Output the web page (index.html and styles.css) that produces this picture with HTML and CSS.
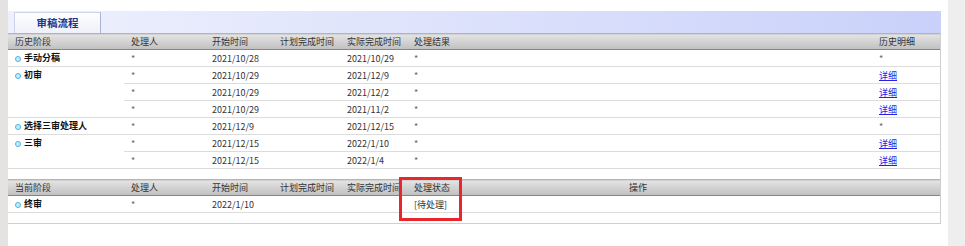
FILE: index.html
```html
<!DOCTYPE html>
<html lang="zh-CN">
<head>
    <meta charset="UTF-8">
    <title>审稿流程</title>
    <link rel="stylesheet" href="styles.css">
</head>
<body>
    <div class="side"></div>
    <div class="main">
        <div class="tabbar">
            <div class="tab">审稿流程</div>
        </div>
        <div class="box">
            <table class="grid">
                <colgroup>
                    <col class="c-stage"><col class="c-user"><col class="c-date"><col class="c-date2"><col class="c-date2"><col class="c-result"><col>
                </colgroup>
                <thead>
                    <tr>
                        <th>历史阶段</th><th>处理人</th><th>开始时间</th><th>计划完成时间</th><th>实际完成时间</th><th>处理结果</th><th>历史明细</th>
                    </tr>
                </thead>
                <tbody>
                    <tr>
                        <td class="stage"><span class="dot"></span>手动分稿</td><td class="star">*</td><td>2021/10/28</td><td></td><td>2021/10/29</td><td class="star">*</td><td class="star">*</td>
                    </tr>
                    <tr>
                        <td class="stage" rowspan="3"><span class="dot"></span>初审</td><td class="star">*</td><td>2021/10/29</td><td></td><td>2021/12/9</td><td class="star">*</td><td><a href="#">详细</a></td>
                    </tr>
                    <tr>
                        <td class="star">*</td><td>2021/10/29</td><td></td><td>2021/12/2</td><td class="star">*</td><td><a href="#">详细</a></td>
                    </tr>
                    <tr>
                        <td class="star">*</td><td>2021/10/29</td><td></td><td>2021/11/2</td><td class="star">*</td><td><a href="#">详细</a></td>
                    </tr>
                    <tr>
                        <td class="stage"><span class="dot"></span>选择三审处理人</td><td class="star">*</td><td>2021/12/9</td><td></td><td>2021/12/15</td><td class="star">*</td><td class="star">*</td>
                    </tr>
                    <tr>
                        <td class="stage" rowspan="2"><span class="dot"></span>三审</td><td class="star">*</td><td>2021/12/15</td><td></td><td>2022/1/10</td><td class="star">*</td><td><a href="#">详细</a></td>
                    </tr>
                    <tr>
                        <td class="star">*</td><td>2021/12/15</td><td></td><td>2022/1/4</td><td class="star">*</td><td><a href="#">详细</a></td>
                    </tr>
                </tbody>
            </table>

            <div class="current">
                <table class="grid">
                    <colgroup>
                        <col class="c-stage"><col class="c-user"><col class="c-date"><col class="c-date2"><col class="c-date2"><col class="c-status"><col>
                    </colgroup>
                    <thead>
                        <tr>
                            <th>当前阶段</th><th>处理人</th><th>开始时间</th><th>计划完成时间</th><th>实际完成时间</th><th>处理状态</th><th>操作</th>
                        </tr>
                    </thead>
                    <tbody>
                        <tr>
                            <td class="stage"><span class="dot"></span>终审</td><td class="star">*</td><td>2022/1/10</td><td></td><td></td><td>[待处理]</td><td></td>
                        </tr>
                        <tr class="blank">
                            <td colspan="7"></td>
                        </tr>
                    </tbody>
                </table>
                <div class="mark"></div>
            </div>
        </div>
    </div>
    <div class="gutter"></div>
</body>
</html>
```

FILE: styles.css
```css
html, body {
    margin: 0;
    padding: 0;
    height: 100%;
}
body {
    display: flex;
    font-family: "Noto Sans CJK SC", "Noto Sans", sans-serif;
    font-size: 9px;
    color: #333;
    background: #fff;
}
.side {
    width: 8px;
    background: #e5e3e1;
}
.main {
    flex: 1;
    padding: 11px 7px 0 0;
}
.gutter {
    width: 17px;
    background: #eeeeee;
}

/* tab strip */
.tabbar {
    height: 22px;
    background: linear-gradient(to right, #eef1fd, #d9defb 60%, #c9d1fa);
    padding-left: 6px;
    display: flex;
    align-items: flex-end;
}
.tab {
    width: 85px;
    height: 20px;
    line-height: 20px;
    text-align: center;
    font-size: 10.5px;
    font-weight: bold;
    color: #25348a;
    background: linear-gradient(#ffffff, #eef0fb);
    border: 1px solid #cdd3ea;
    border-right-color: #aab3d6;
    border-bottom: none;
}

/* tables */
.box {
    border-right: 1px solid #cfcfcf;
}
.grid {
    width: 100%;
    border-collapse: collapse;
    table-layout: fixed;
}
.c-stage { width: 116px; }
.c-user { width: 81px; }
.c-date { width: 68px; }
.c-date2 { width: 67px; }
.c-result { width: 465px; }
.c-status { width: 215px; }
.grid th {
    height: 15px;
    padding: 0 0 0 7px;
    text-align: left;
    font-weight: normal;
    color: #333;
    background: linear-gradient(#e4e4e4, #bfbfbf);
    border-top: 1px solid #b4b4b4;
    border-bottom: 1px solid #858585;
    white-space: nowrap;
}
.grid td {
    height: 16px;
    padding: 0 0 0 7px;
    border-bottom: 1px solid #dcdcdc;
    white-space: nowrap;
    vertical-align: middle;
    color: #333;
}
.grid td.stage {
    vertical-align: top;
    line-height: 16px;
    font-weight: bold;
    color: #111;
}
.grid td.star {
    color: #666;
}
.dot {
    display: inline-block;
    width: 4px;
    height: 4px;
    margin: 0 3px 0 0;
    border: 1.5px solid #47b6ea;
    border-radius: 50%;
    background: #c8ebfb;
    vertical-align: -1px;
}
.grid a {
    color: #2323e6;
    text-decoration: underline;
}
.current {
    position: relative;
    margin-top: 10px;
}
.grid tr.blank td {
    height: 10px;
    border-bottom-color: #cfcfcf;
}

/* highlight around the status column */
.mark {
    position: absolute;
    left: 391px;
    top: -2px;
    width: 63px;
    height: 44px;
    box-sizing: border-box;
    border: 3px solid #e8262b;
}
```
